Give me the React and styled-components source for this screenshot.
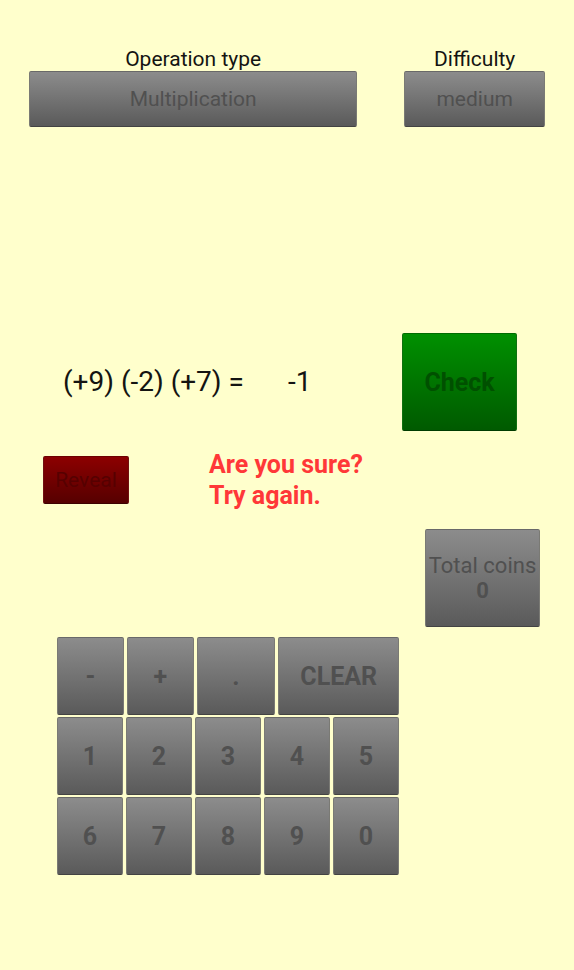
import React from "react";
import styled, { createGlobalStyle, css } from "styled-components";

const GlobalStyle = createGlobalStyle`
  * { box-sizing: border-box; }
  body {
    margin: 0;
    background: #ffffcc;
    color: #141412;
    font-family: Roboto, "Liberation Sans", sans-serif;
  }
`;

const tones = {
  gray: css`
    background: linear-gradient(#8c8c8c, #5a5a5a);
    border-color: #696969 #7a7a74 #434343;
    color: #505050;
  `,
  green: css`
    background: linear-gradient(#009000, #005a00);
    border-color: #006c00 #107010 #003c00;
    color: #005000;
  `,
  red: css`
    background: linear-gradient(#8c0000, #560000);
    border-color: #6c0000 #701010 #3c0000;
    color: #560000;
  `,
};

const Button = styled.button`
  display: flex;
  flex-direction: column;
  align-items: center;
  justify-content: center;
  min-width: 0;
  padding: 0;
  border: 1px solid;
  border-radius: 2px;
  background-origin: border-box;
  font-family: inherit;
  font-size: 21px;
  line-height: 25px;
  white-space: nowrap;
  ${({ $tone = "gray" }) => tones[$tone]}
`;

const Screen = styled.main`
  display: flex;
  flex-direction: column;
  padding: 47px 29px 94px;
`;

const Settings = styled.section`
  display: grid;
  grid-template-columns: 7fr 3fr;
  gap: 47px;
`;

const Setting = styled.div`
  display: flex;
  flex-direction: column;
`;

const SettingLabel = styled.label`
  font-size: 21px;
  line-height: 24px;
  text-align: center;
`;

const SettingButton = styled(Button)`
  height: 56px;
`;

const Problem = styled.section`
  display: flex;
  align-items: center;
  margin: 206px 28px 0 34px;
  font-size: 28px;
  line-height: 32px;
`;

const Answer = styled.output`
  margin-left: 44px;
`;

const CheckButton = styled(Button)`
  width: 115px;
  height: 98px;
  margin-left: auto;
  font-size: 25px;
  font-weight: 700;
`;

const Feedback = styled.section`
  display: flex;
  align-items: center;
  gap: 80px;
  margin: 18px 0 0 14px;
`;

const RevealButton = styled(Button)`
  width: 86px;
  height: 48px;
`;

const Message = styled.p`
  margin: 0;
  color: #ff3838;
  font-size: 25px;
  font-weight: 700;
  line-height: 31px;
`;

const CoinsButton = styled(Button)`
  align-self: flex-end;
  width: 115px;
  height: 98px;
  margin: 18px 5px 0 0;
  font-size: 22px;
`;

const Keypad = styled.section`
  display: flex;
  flex-direction: column;
  gap: 2px;
  margin: 10px 146px 0 28px;
`;

const KeyRow = styled.div`
  display: grid;
  grid-template-columns: ${({ $columns }) => $columns};
  gap: 3px;
`;

const Key = styled(Button)`
  height: 78px;
  font-size: 25px;
  font-weight: 700;
`;

const evenColumns = "repeat(5, 1fr)";
const keyRows = [
  { columns: "67fr 67fr 79fr 121fr", keys: ["-", "+", ".", "CLEAR"] },
  { columns: evenColumns, keys: ["1", "2", "3", "4", "5"] },
  { columns: evenColumns, keys: ["6", "7", "8", "9", "0"] },
];

export default function App() {
  return (
    <>
      <GlobalStyle />
      <Screen>
        <Settings>
          <Setting>
            <SettingLabel htmlFor="operation">Operation type</SettingLabel>
            <SettingButton id="operation" type="button">Multiplication</SettingButton>
          </Setting>
          <Setting>
            <SettingLabel htmlFor="difficulty">Difficulty</SettingLabel>
            <SettingButton id="difficulty" type="button">medium</SettingButton>
          </Setting>
        </Settings>
        <Problem>
          <span>(+9) (-2) (+7) =</span>
          <Answer>-1</Answer>
          <CheckButton type="button" $tone="green">Check</CheckButton>
        </Problem>
        <Feedback>
          <RevealButton type="button" $tone="red">Reveal</RevealButton>
          <Message role="status">
            Are you sure?
            <br />
            Try again.
          </Message>
        </Feedback>
        <CoinsButton type="button">
          <span>Total coins</span>
          <strong>0</strong>
        </CoinsButton>
        <Keypad aria-label="Keypad">
          {keyRows.map(({ columns, keys }) => (
            <KeyRow key={keys[0]} $columns={columns}>
              {keys.map((label) => (
                <Key key={label} type="button">{label}</Key>
              ))}
            </KeyRow>
          ))}
        </Keypad>
      </Screen>
    </>
  );
}
